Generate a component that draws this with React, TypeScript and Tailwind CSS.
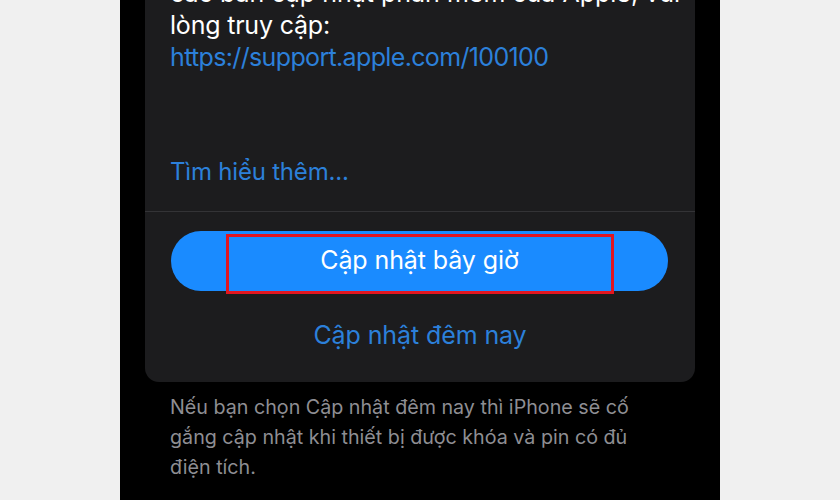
import React from "react";

export default function App() {
  const font = { fontFamily: "Inter, 'Noto Sans', 'Liberation Sans', sans-serif" };
  return (
    <div className="relative flex w-[840px] h-[500px] overflow-hidden bg-black" style={font}>
      <div className="w-[120px] h-full bg-[#f0f0f0]" />
      <div className="w-[600px] h-full bg-black px-[25px]">
        <div className="bg-[#1c1c1e] rounded-b-[14px] pb-[31px]">
          <div className="pl-[25px] pr-[10px] -mt-[23px] text-[25px] leading-[32px] text-white">
            <div className="whitespace-nowrap tracking-[0px]">các bản cập nhật phần mềm của Apple, vui</div>
            <div className="whitespace-nowrap tracking-[-0.2px]">lòng truy cập:</div>
            <div className="whitespace-nowrap text-[#2c80da] tracking-[-0.65px]">https://support.apple.com/100100</div>
          </div>
          <div className="mt-[83px] pl-[25px] text-[24px] leading-[32px] text-[#2c80da] tracking-[-0.2px]">
            Tìm hiểu thêm...
          </div>
          <div className="mt-[23px] h-px bg-[#333336]" />
          <div className="mt-[19px] ml-[26px] mr-[27px] h-[60px] rounded-full bg-[#1a8bff] flex items-center justify-center text-white text-[25px] tracking-[-0.1px]">
            Cập nhật bây giờ
          </div>
          <div className="mt-[28px] text-center text-[25px] leading-[32px] text-[#2c80da] tracking-[-0.1px]">
            Cập nhật đêm nay
          </div>
        </div>
        <div className="mt-[10px] pl-[25px] text-[19.7px] leading-[30px] text-[#8e8e93]">
          <div className="whitespace-nowrap">Nếu bạn chọn Cập nhật đêm nay thì iPhone sẽ cố</div>
          <div className="whitespace-nowrap">gắng cập nhật khi thiết bị được khóa và pin có đủ</div>
          <div className="whitespace-nowrap">điện tích.</div>
        </div>
      </div>
      <div className="w-[120px] h-full bg-[#f0f0f0]" />
      <div className="absolute left-[226px] top-[234px] w-[388px] h-[60px] border-[3px] border-[#e3151f]" />
    </div>
  );
}
